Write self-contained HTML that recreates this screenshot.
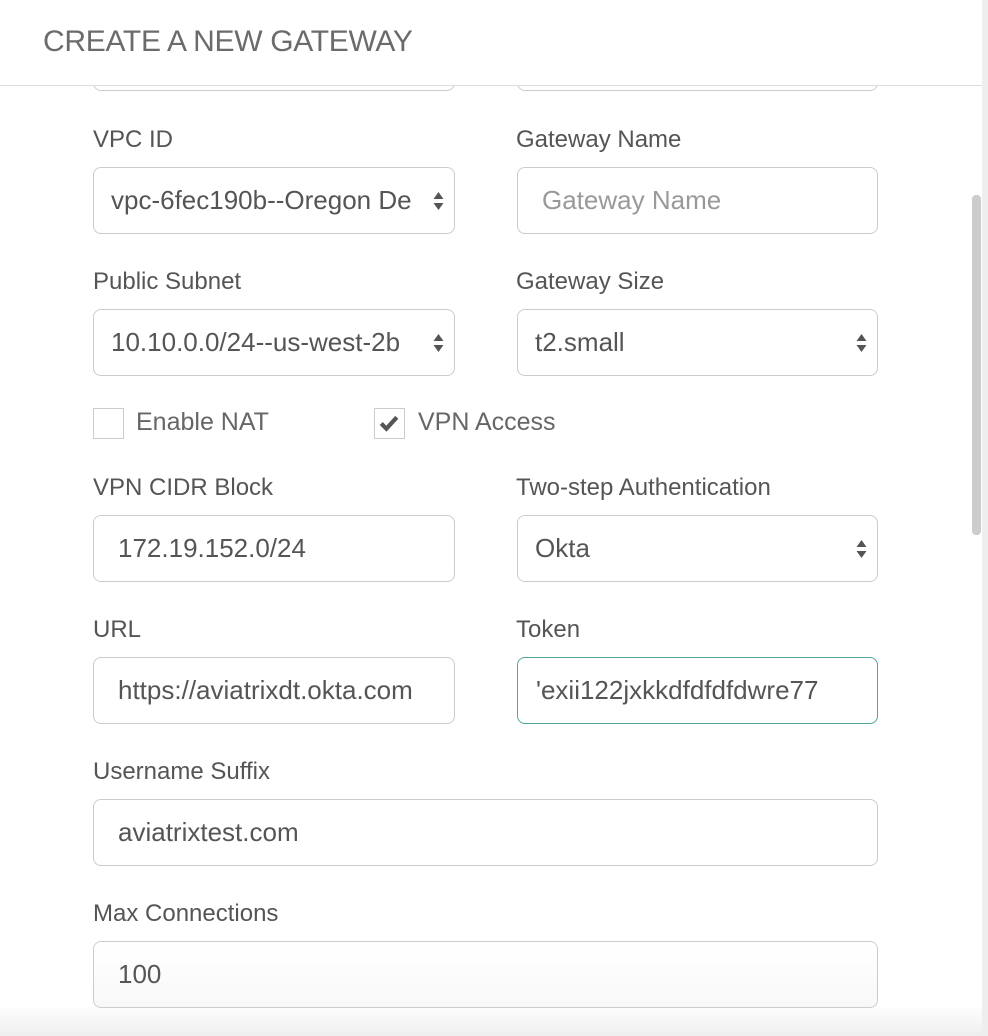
<!DOCTYPE html>
<html><head><style>
body{margin:0;width:988px;height:1036px;overflow:hidden;background:#fff;font-family:"Liberation Sans",sans-serif;position:relative}
.hdr{position:absolute;left:0;top:0;width:982px;height:85px;border-bottom:1px solid #ddd;background:#fff;z-index:2}
.hdr span{position:absolute;left:43px;top:25px;font-size:30px;color:#6b6b6b;letter-spacing:-0.3px}
.lbl{position:absolute;font-size:24px;color:#555}
.box{position:absolute;height:67px;border:1.5px solid #ccc;border-radius:8px;box-sizing:border-box;font-size:26px;color:#555;line-height:64px;padding-left:24px;padding-right:24px;white-space:nowrap;overflow:hidden;background:#fff}
.sel{padding-left:17px}
.arr{position:absolute;right:9px;top:22px;width:13px;height:22px}
.cb{position:absolute;width:31px;height:31px;border:1.5px solid #ccc;box-sizing:border-box;background:#fff}
.rightbar{position:absolute;left:982px;top:0;width:6px;height:1036px;background:#eee}
.thumb{position:absolute;left:972px;top:195px;width:9px;height:340px;background:#ccc;border-radius:4px}
.bottom{position:absolute;left:0;top:1005px;width:982px;height:31px;background:linear-gradient(#fff,#eee)}
</style></head><body>
<div class="bottom"></div>
<div class="hdr"><span>CREATE A NEW GATEWAY</span></div>
<div class="box" style="left:93px;top:24px;width:362px"></div>
<div class="box" style="left:517px;top:24px;width:361px"></div>

<div class="lbl" style="left:93px;top:126px">VPC ID</div>
<div class="lbl" style="left:516px;top:126px">Gateway Name</div>
<div class="box sel" style="left:93px;top:167px;width:362px">vpc-6fec190b--Oregon De<svg class="arr" viewBox="0 0 12 22"><path d="M1 9L6 2L11 9Z M1 13L6 20L11 13Z" fill="#555"/></svg></div>
<div class="box" style="left:517px;top:167px;width:361px;color:#999">Gateway Name</div>

<div class="lbl" style="left:93px;top:268px">Public Subnet</div>
<div class="lbl" style="left:516px;top:268px">Gateway Size</div>
<div class="box sel" style="left:93px;top:309px;width:362px">10.10.0.0/24--us-west-2b<svg class="arr" viewBox="0 0 12 22"><path d="M1 9L6 2L11 9Z M1 13L6 20L11 13Z" fill="#555"/></svg></div>
<div class="box sel" style="left:517px;top:309px;width:361px">t2.small<svg class="arr" viewBox="0 0 12 22"><path d="M1 9L6 2L11 9Z M1 13L6 20L11 13Z" fill="#555"/></svg></div>

<div class="cb" style="left:93px;top:408px"></div>
<div class="lbl" style="left:136px;top:408px;color:#666;font-size:25px">Enable NAT</div>
<div class="cb" style="left:374px;top:408px"><svg width="28" height="28" viewBox="0 0 27 27"><path d="M6 14L11 19L21 8" stroke="#555" stroke-width="4" fill="none"/></svg></div>
<div class="lbl" style="left:418px;top:408px;color:#666;font-size:25px">VPN Access</div>

<div class="lbl" style="left:93px;top:474px">VPN CIDR Block</div>
<div class="lbl" style="left:516px;top:474px">Two-step Authentication</div>
<div class="box" style="left:93px;top:515px;width:362px">172.19.152.0/24</div>
<div class="box sel" style="left:517px;top:515px;width:361px">Okta<svg class="arr" viewBox="0 0 12 22"><path d="M1 9L6 2L11 9Z M1 13L6 20L11 13Z" fill="#555"/></svg></div>

<div class="lbl" style="left:93px;top:616px">URL</div>
<div class="lbl" style="left:516px;top:616px">Token</div>
<div class="box" style="left:93px;top:657px;width:362px">https://aviatrixdt.okta.com</div>
<div class="box" style="left:517px;top:657px;width:361px;border-color:#4ea69c;padding-left:18px">'exii122jxkkdfdfdfdwre77</div>

<div class="lbl" style="left:93px;top:758px">Username Suffix</div>
<div class="box" style="left:93px;top:799px;width:785px">aviatrixtest.com</div>

<div class="lbl" style="left:93px;top:900px">Max Connections</div>
<div class="box" style="left:93px;top:941px;width:785px;background:linear-gradient(#fff,#f8f8f8)">100</div>

<div class="rightbar"></div>
<div class="thumb"></div>
</body></html>
